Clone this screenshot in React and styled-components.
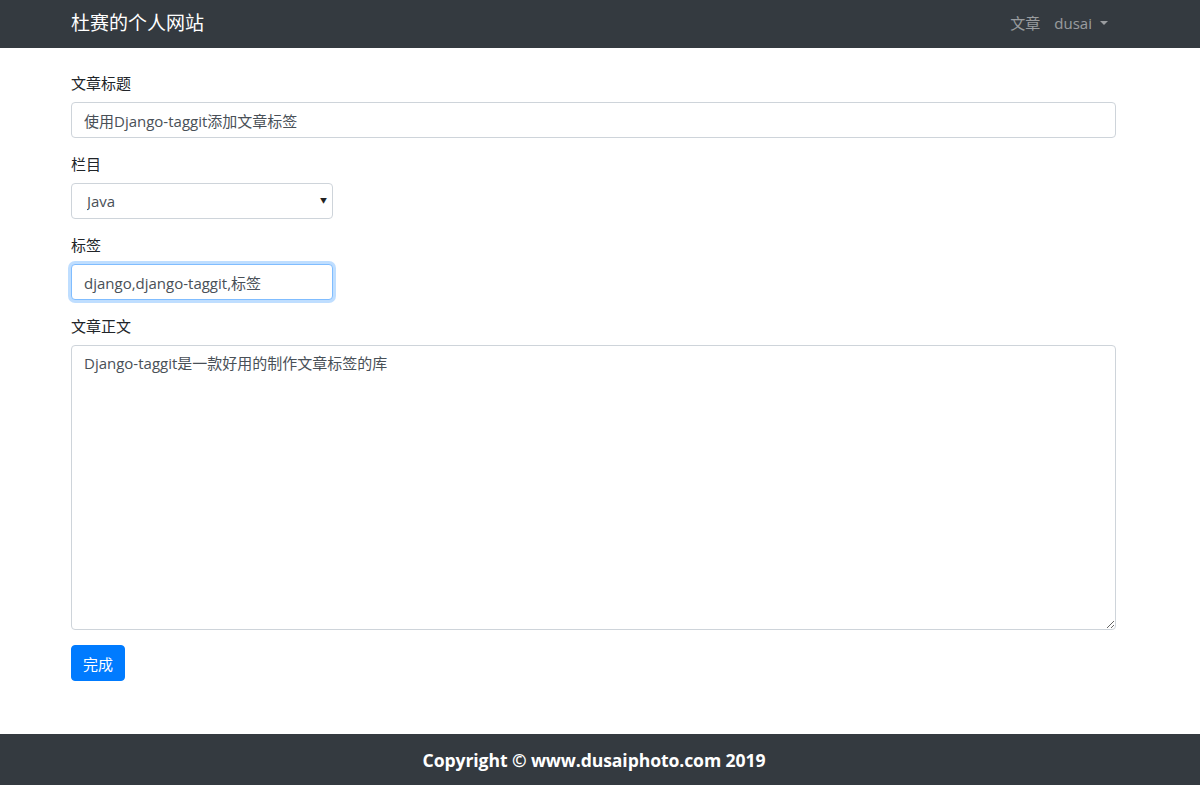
import React from 'react';
import styled, {createGlobalStyle} from 'styled-components';

const GlobalStyle = createGlobalStyle`
  * { box-sizing: border-box; }
  html, body { margin: 0; padding: 0; }
  body {
    font-family: 'Open Sans', 'Noto Sans CJK SC', sans-serif;
    font-size: 15px;
    color: #212529;
    background: #fff;
  }
`;

function App() {
  return (
    <Page>
      <GlobalStyle />
      <Navbar>
        <Container>
          <Brand>杜赛的个人网站</Brand>
          <NavLinks>
            <NavLink>文章</NavLink>
            <NavLink>
              dusai
              <Caret />
            </NavLink>
          </NavLinks>
        </Container>
      </Navbar>

      <Main>
        <Container>
          <Form onSubmit={(e) => e.preventDefault()}>
            <FormGroup>
              <Label>文章标题</Label>
              <Input type="text" defaultValue="使用Django-taggit添加文章标签" />
            </FormGroup>
            <FormGroup>
              <Label>栏目</Label>
              <SelectWrap>
                <Select defaultValue="java">
                  <option value="java">Java</option>
                  <option value="python">Python</option>
                </Select>
                <SelectArrow>▼</SelectArrow>
              </SelectWrap>
            </FormGroup>
            <FormGroup>
              <Label>标签</Label>
              <Input type="text" narrow focused defaultValue="django,django-taggit,标签" />
            </FormGroup>
            <FormGroup>
              <Label>文章正文</Label>
              <TextArea defaultValue="Django-taggit是一款好用的制作文章标签的库" />
            </FormGroup>
            <SubmitButton type="submit">完成</SubmitButton>
          </Form>
        </Container>
      </Main>

      <Footer>
        <FooterText>Copyright © www.dusaiphoto.com 2019</FooterText>
      </Footer>
    </Page>
  );
}

const Page = styled.div`
  min-height: 100vh;
  display: flex;
  flex-direction: column;
`;

const Container = styled.div`
  width: 1045px;
  margin-left: 71px;
`;

const Navbar = styled.nav`
  height: 48px;
  background-color: #343a40;
  display: flex;
  align-items: center;

  ${Container} {
    display: flex;
    align-items: center;
    justify-content: space-between;
  }
`;

const Brand = styled.a`
  color: #fff;
  font-size: 19px;
  line-height: 28px;
  margin-top: -2px;
  cursor: pointer;
`;

const NavLinks = styled.div`
  display: flex;
  align-items: center;
`;

const NavLink = styled.a`
  display: flex;
  align-items: center;
  color: rgba(255, 255, 255, 0.5);
  font-size: 15px;
  line-height: 22px;
  padding: 8px 8px 10px;
  margin-left: -2px;
  cursor: pointer;
`;

const Caret = styled.span`
  display: inline-block;
  margin-left: 8px;
  border-top: 4.5px solid rgba(255, 255, 255, 0.5);
  border-left: 4.5px solid transparent;
  border-right: 4.5px solid transparent;
`;

const Main = styled.main`
  flex: 1;
  padding-top: 24px;
`;

const Form = styled.form`
  display: flex;
  flex-direction: column;
  align-items: flex-start;
`;

const FormGroup = styled.div`
  width: 100%;
  margin-bottom: 15px;
`;

const Label = styled.label`
  display: block;
  font-size: 15px;
  line-height: 22px;
  margin-bottom: 8px;
  color: #212529;
`;

const Input = styled.input`
  display: block;
  width: ${({narrow}) => (narrow ? '262px' : '100%')};
  height: 36px;
  padding: 5px 12px;
  font-family: inherit;
  font-size: 15px;
  color: #495057;
  background: #fff;
  border: 1px solid ${({focused}) => (focused ? '#80bdff' : '#ced4da')};
  border-radius: 4px;
  box-shadow: ${({focused}) => (focused ? '0 0 0 3px rgba(0, 123, 255, 0.25)' : 'none')};
  outline: none;

  &:focus {
    border-color: #80bdff;
    box-shadow: 0 0 0 3px rgba(0, 123, 255, 0.25);
  }
`;

const SelectWrap = styled.div`
  position: relative;
  width: 262px;
`;

const Select = styled.select`
  display: block;
  width: 100%;
  height: 36px;
  padding: 4px 15px;
  font-family: inherit;
  font-size: 15px;
  color: #495057;
  background: #fff;
  border: 1px solid #ced4da;
  border-radius: 4px;
  appearance: none;
  outline: none;
`;

const SelectArrow = styled.span`
  position: absolute;
  right: 6px;
  top: 12px;
  font-size: 7px;
  color: #222;
  pointer-events: none;
`;

const TextArea = styled.textarea`
  display: block;
  width: 100%;
  height: 285px;
  padding: 6px 12px;
  font-family: inherit;
  font-size: 15px;
  line-height: 22px;
  color: #495057;
  background: #fff;
  border: 1px solid #ced4da;
  border-radius: 4px;
  outline: none;
`;

const SubmitButton = styled.button`
  height: 36px;
  padding: 0 11px;
  font-family: inherit;
  font-size: 15px;
  color: #fff;
  background-color: #007bff;
  border: 1px solid #007bff;
  border-radius: 4px;
  cursor: pointer;
`;

const Footer = styled.footer`
  height: 51px;
  background-color: #343a40;
  display: flex;
  align-items: center;
  justify-content: center;
`;

const FooterText = styled.p`
  margin: 0 12px 0 0;
  color: #fff;
  font-size: 17.6px;
  font-weight: 700;
  letter-spacing: -0.1px;
`;

export default App;
